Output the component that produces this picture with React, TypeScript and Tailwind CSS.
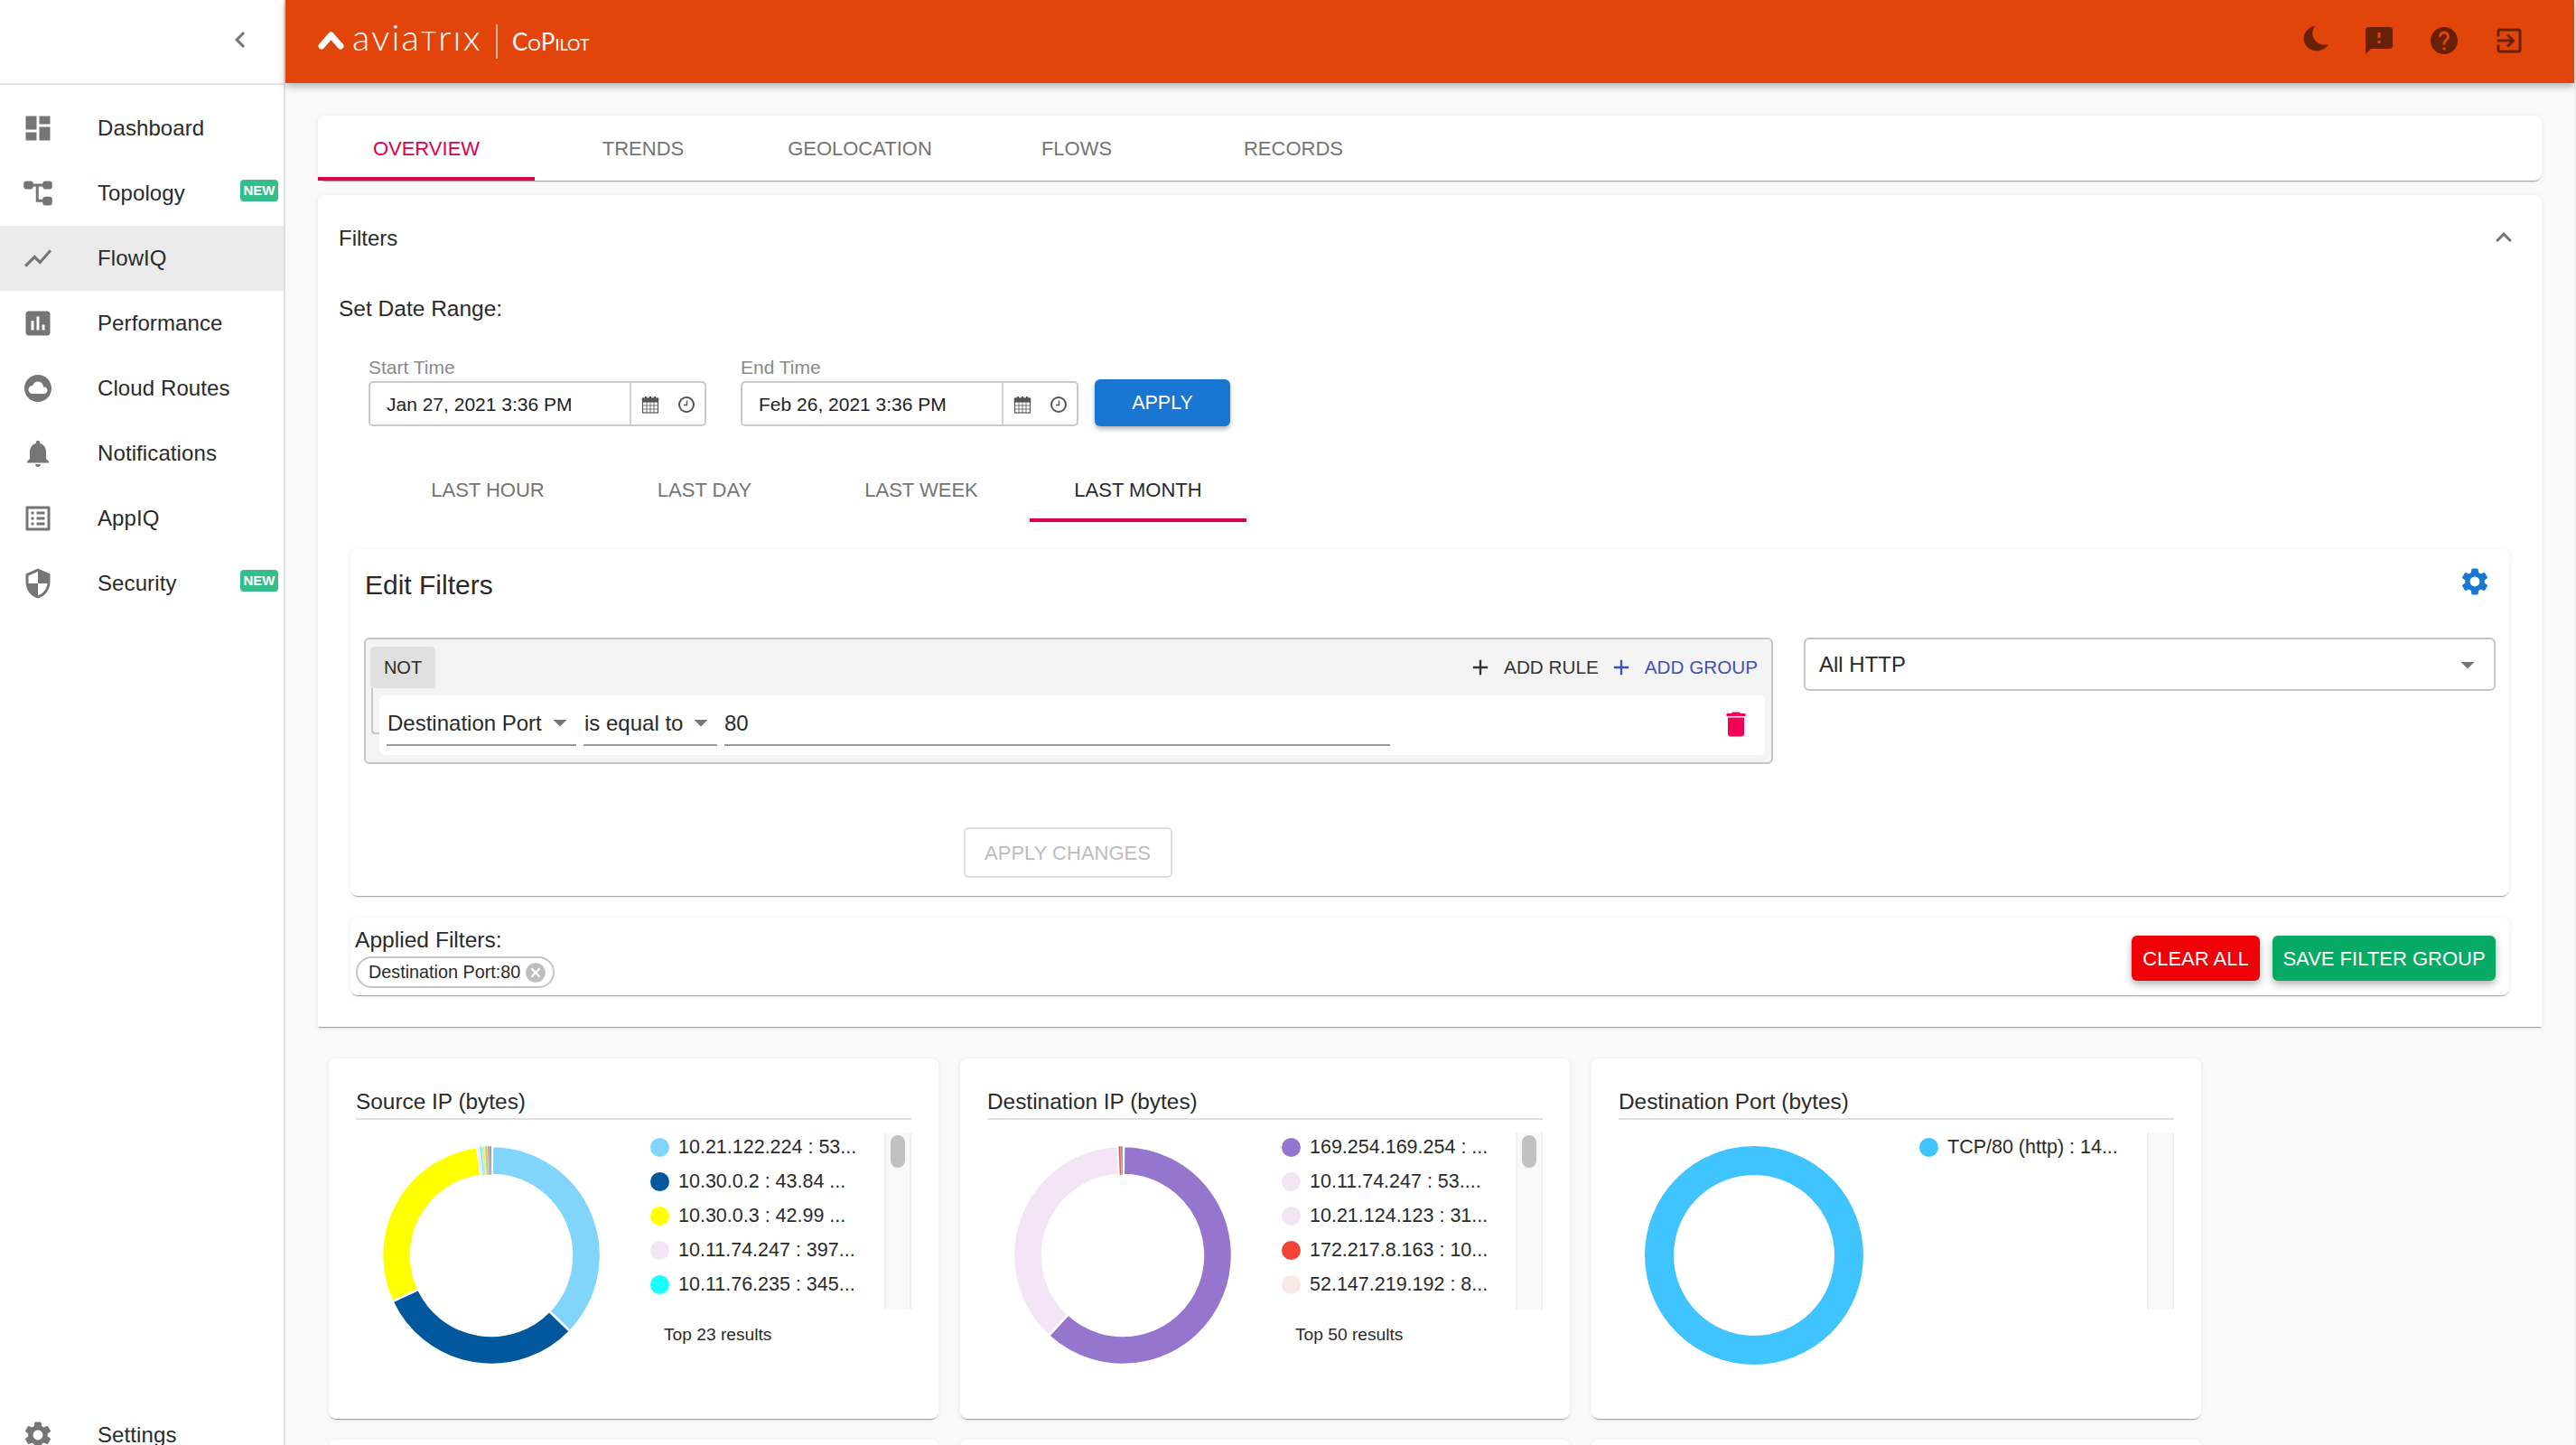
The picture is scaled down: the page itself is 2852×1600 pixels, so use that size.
/* ============================================================
   COPILOT FLOWIQ — Overview tab with filters and top-talker donuts
   ============================================================ */

const P = {
  dashboard: 'M3 13h8V3H3v10zm0 8h8v-6H3v6zm10 0h8V11h-8v10zm0-18v6h8V3h-8z',
  chart: 'M3.5 18.49l6-6.01 4 4L22 6.92l-1.41-1.41-7.09 7.97-4-4L2 16.99z',
  assessment: 'M19 3H5c-1.1 0-2 .9-2 2v14c0 1.1.9 2 2 2h14c1.1 0 2-.9 2-2V5c0-1.1-.9-2-2-2zM9 17H7v-7h2v7zm4 0h-2V7h2v10zm4 0h-2v-4h2v4z',
  cloud: 'M12 2C6.47 2 2 6.47 2 12s4.47 10 10 10 10-4.47 10-10S17.53 2 12 2zm4.5 14H8c-1.66 0-3-1.34-3-3s1.34-3 3-3l.14.01C8.58 8.28 10.13 7 12 7c2.21 0 4 1.79 4 4h.5c1.38 0 2.5 1.12 2.5 2.5S17.88 16 16.5 16z',
  bell: 'M12 22c1.1 0 2-.9 2-2h-4c0 1.1.89 2 2 2zm6-6v-5c0-3.07-1.64-5.64-4.5-6.32V4c0-.83-.67-1.5-1.5-1.5s-1.5.67-1.5 1.5v.68C7.63 5.36 6 7.92 6 11v5l-2 2v1h16v-1l-2-2z',
  list: 'M19 5v14H5V5h14m1.1-2H3.9c-.5 0-.9.4-.9.9v16.2c0 .4.4.9.9.9h16.2c.4 0 .9-.5.9-.9V3.9c0-.5-.5-.9-.9-.9zM11 7h6v2h-6V7zm0 4h6v2h-6v-2zm0 4h6v2h-6zM7 7h2v2H7zm0 4h2v2H7zm0 4h2v2H7z',
  security: 'M12 1L3 5v6c0 5.55 3.84 10.74 9 12 5.16-1.26 9-6.45 9-12V5l-9-4zm0 10.99h7c-.53 4.12-3.28 7.79-7 8.94V12H5V6.3l7-3.11v8.8z',
  settings: 'M19.14 12.94c.04-.3.06-.61.06-.94 0-.32-.02-.64-.07-.94l2.03-1.58c.18-.14.23-.41.12-.61l-1.92-3.32c-.12-.22-.37-.29-.59-.22l-2.39.96c-.5-.38-1.03-.7-1.62-.94l-.36-2.54c-.04-.24-.24-.41-.48-.41h-3.84c-.24 0-.43.17-.47.41l-.36 2.54c-.59.24-1.13.57-1.62.94l-2.39-.96c-.22-.08-.47 0-.59.22L2.74 8.87c-.12.21-.08.47.12.61l2.03 1.58c-.05.3-.09.63-.09.94s.02.64.07.94l-2.03 1.58c-.18.14-.23.41-.12.61l1.92 3.32c.12.22.37.29.59.22l2.39-.96c.5.38 1.03.7 1.62.94l.36 2.54c.05.24.24.41.48.41h3.84c.24 0 .44-.17.47-.41l.36-2.54c.59-.24 1.13-.56 1.62-.94l2.39.96c.22.08.47 0 .59-.22l1.92-3.32c.12-.22.07-.47-.12-.61l-2.01-1.58zM12 15.6c-1.98 0-3.6-1.62-3.6-3.6s1.62-3.6 3.6-3.6 3.6 1.62 3.6 3.6-1.62 3.6-3.6 3.6z',
  chevronLeft: 'M15.41 7.41L14 6l-6 6 6 6 1.41-1.41L10.83 12z',
  expandLess: 'M12 8l-6 6 1.41 1.41L12 10.83l4.59 4.58L18 14z',
  moon: 'M11.5 3C6.5 4 3 8 3 12.5c0 5 4.5 9 9.5 9 3.5 0 7-2 9-4.7-6.5 1.7-12-2.8-12-8.3 0-2 .8-4 2-5.5z',
  feedback: 'M20 2H4c-1.1 0-1.99.9-1.99 2L2 22l4-4h14c1.1 0 2-.9 2-2V4c0-1.1-.9-2-2-2zm-7 12h-2v-2h2v2zm0-4h-2V6h2v4z',
  help: 'M12 2C6.48 2 2 6.48 2 12s4.48 10 10 10 10-4.48 10-10S17.52 2 12 2zm1 17h-2v-2h2v2zm2.07-7.75l-.9.92C13.45 12.9 13 13.5 13 15h-2v-.5c0-1.1.45-2.1 1.17-2.83l1.24-1.26c.37-.36.59-.86.59-1.41 0-1.1-.9-2-2-2s-2 .9-2 2H8c0-2.21 1.79-4 4-4s4 1.79 4 4c0 .88-.36 1.68-.93 2.25z',
  exit: 'M10.09 15.59L11.5 17l5-5-5-5-1.41 1.41L12.67 11H3v2h9.67l-2.58 2.59zM19 3H5c-1.11 0-2 .9-2 2v4h2V5h14v14H5v-4H3v4c0 1.1.89 2 2 2h14c1.1 0 2-.9 2-2V5c0-1.1-.9-2-2-2z',
  trash: 'M6 19c0 1.1.9 2 2 2h8c1.1 0 2-.9 2-2V7H6v12zM19 4h-3.5l-1-1h-5l-1 1H5v2h14V4z',
  add: 'M19 13h-6v6h-2v-6H5v-2h6V5h2v6h6v2z',
  drop: 'M7 10l5 5 5-5z',
  cancel: 'M12 2C6.47 2 2 6.47 2 12s4.47 10 10 10 10-4.47 10-10S17.53 2 12 2zm5 13.59L15.59 17 12 13.41 8.41 17 7 15.59 10.59 12 7 8.41 8.41 7 12 10.59 15.59 7 17 8.41 13.41 12 17 15.59z',
};

function Icon({ d, className }: { d: string; className: string }) {
  return (
    <svg viewBox="0 0 24 24" fill="currentColor" className={className}>
      <path d={d} />
    </svg>
  );
}

function TopologyIcon() {
  return (
    <svg viewBox="0 0 24 24" fill="currentColor" className="w-[36px] h-[36px] shrink-0 text-[#757575]">
      <rect x="1.5" y="3" width="7" height="6" rx="2" />
      <rect x="15.5" y="3" width="7" height="6" rx="2" />
      <rect x="15.5" y="14.5" width="7" height="6.5" rx="2" />
      <path d="M8 6h8M11.5 6v11.5h4.5" fill="none" stroke="currentColor" strokeWidth="2" />
    </svg>
  );
}

const NAV = [
  { label: 'Dashboard', d: P.dashboard },
  { label: 'Topology', isNew: true },
  { label: 'FlowIQ', d: P.chart, active: true },
  { label: 'Performance', d: P.assessment },
  { label: 'Cloud Routes', d: P.cloud },
  { label: 'Notifications', d: P.bell },
  { label: 'AppIQ', d: P.list },
  { label: 'Security', d: P.security, isNew: true },
];

function NavRow({ label, d, active, isNew }: { label: string; d?: string; active?: boolean; isNew?: boolean }) {
  return (
    <div className={`h-[72px] flex items-center pl-[24px] pr-[6px] ${active ? 'bg-[#ebebeb]' : ''}`}>
      {d ? <Icon d={d} className="w-[36px] h-[36px] shrink-0 text-[#757575]" /> : <TopologyIcon />}
      <span className="ml-[48px] text-[24px] text-[#2a2a2a] tracking-[0.1px]">{label}</span>
      {isNew && (
        <span className="ml-auto -mt-[6px] w-[42px] h-[24px] rounded-[4px] bg-[#36bd8c] text-white text-[15px] font-bold flex items-center justify-center">
          NEW
        </span>
      )}
    </div>
  );
}

function Sidebar() {
  return (
    <aside className="w-[316px] shrink-0 h-full bg-white border-r-2 border-[#e0e0e0] overflow-hidden">
      <div className="h-[94px] border-b-2 border-[#e4e4e4] flex items-center justify-end pr-[30px] pb-[4px]">
        <Icon d={P.chevronLeft} className="w-[36px] h-[36px] text-[#757575]" />
      </div>
      <div className="mt-[12px]">
        {NAV.map((n) => (
          <NavRow key={n.label} {...n} />
        ))}
      </div>
      <div className="mt-[871px]">
        <NavRow label="Settings" d={P.settings} />
      </div>
    </aside>
  );
}

function TopBar() {
  return (
    <header className="h-[92px] shrink-0 bg-[#e2450a] shadow-[0_4px_8px_rgba(0,0,0,0.28)] flex items-center pl-[36px] pr-[54px] relative z-10">
      <svg viewBox="0 0 29 21" className="w-[29px] h-[21px] mt-[-4px]">
        <path d="M4 17L14.5 5L25 17" fill="none" stroke="white" strokeWidth="7" strokeLinecap="round" strokeLinejoin="round" />
      </svg>
      <span className="ml-[9px] w-[142px] [font-family:Lato,sans-serif] font-light text-[40px] leading-none text-white tracking-[2.2px] -mt-[10px] whitespace-nowrap">
        avia<span className="text-[29px]">T</span>rıx
      </span>
      <span className="ml-[17px] w-[2px] h-[38px] bg-[#f3b79f]" />
      <span className="ml-[16px] [font-family:Lato,sans-serif] font-normal text-[26px] leading-none text-white [font-variant:small-caps]">CoPilot</span>
      <div className="ml-auto flex items-center gap-[36px] text-[#682008] -mt-[2px]">
        <Icon d={P.moon} className="w-[36px] h-[36px] -mt-[6px] -mr-[2px]" />
        <Icon d={P.feedback} className="w-[36px] h-[36px]" />
        <Icon d={P.help} className="w-[36px] h-[36px]" />
        <Icon d={P.exit} className="w-[36px] h-[36px]" />
      </div>
    </header>
  );
}

const TOP_TABS = ['OVERVIEW', 'TRENDS', 'GEOLOCATION', 'FLOWS', 'RECORDS'];
const RANGE_TABS = ['LAST HOUR', 'LAST DAY', 'LAST WEEK', 'LAST MONTH'];

const cardShadow = 'shadow-[0_2px_1px_-1px_rgba(0,0,0,0.35),0_1px_6px_rgba(0,0,0,0.08)]';

function CalendarIcon() {
  return (
    <svg viewBox="0 0 20 20" className="w-[20px] h-[20px] text-[#555]" fill="none" stroke="currentColor" strokeWidth="1.2">
      <rect x="1.5" y="3.5" width="17" height="15.5" fill="#fff" />
      <rect x="1.5" y="3" width="17" height="4" fill="currentColor" />
      <path d="M5 1v4M10 1v4M15 1v4" strokeWidth="2" />
      <path d="M1.5 11h17M1.5 15h17M6 7v12M10 7v12M14 7v12" strokeWidth="0.8" />
    </svg>
  );
}

function ClockIcon() {
  return (
    <svg viewBox="0 0 20 20" className="w-[20px] h-[20px] text-[#555]" fill="none" stroke="currentColor" strokeWidth="2">
      <circle cx="10" cy="10" r="8" />
      <path d="M10.5 5.5v5H7" strokeWidth="1.4" />
    </svg>
  );
}

function DateField({ label, value }: { label: string; value: string }) {
  return (
    <div className="w-[374px]">
      <div className="h-[30px] text-[21px] leading-[30px] text-[#8a8a8a]">{label}</div>
      <div className="h-[50px] border-2 border-[#c9c9c9] rounded-[5px] flex items-center">
        <span className="w-[289px] h-full flex items-center pl-[18px] pt-[2px] text-[21px] text-[#222] border-r-2 border-[#d4d4d4]">{value}</span>
        <span className="flex-1 flex items-center justify-around pl-[1px] pt-[1px]">
          <CalendarIcon />
          <ClockIcon />
        </span>
      </div>
    </div>
  );
}

function TextButton({ color, children }: { color: string; children: string }) {
  return (
    <button className={`h-[50px] rounded-[6px] text-white text-[22px] shadow-[0_4px_8px_rgba(0,0,0,0.3)] ${color}`}>{children}</button>
  );
}

function RuleSelect({ text, width }: { text: string; width: string }) {
  return (
    <div className={`h-[50px] border-b-2 border-[#9a9a9a] flex items-center justify-between text-[24px] text-[#2a2a2a] whitespace-nowrap ${width}`}>
      <span className="pl-[1px] pt-[2px]">{text}</span>
      <Icon d={P.drop} className="w-[36px] h-[36px] text-[#757575]" />
    </div>
  );
}

function EditFilters() {
  return (
    <section className={`mx-[36px] mt-[30px] h-[384px] bg-white rounded-[8px] ${cardShadow} pt-[20px]`}>
      <div className="flex items-center justify-between pl-[16px] pr-[20px] h-[40px]">
        <h2 className="text-[30px] text-[#2a2a2a] font-normal -mt-[2px]">Edit Filters</h2>
        <Icon d={P.settings} className="w-[36px] h-[36px] text-[#1976d2] -mt-[8px]" />
      </div>
      <div className="flex gap-[34px] pl-[15px] pr-[15px] mt-[38px]">
        <div className="w-[1560px] flex flex-col items-center">
          <div className="w-full h-[140px] relative bg-[#f4f4f4] border-2 border-[#c6c6c6] rounded-[6px] pt-[8px]">
            <div className="flex items-center justify-between pl-[5px] pr-[15px]">
              <span className="w-[72px] h-[46px] bg-[#e0e0e0] rounded-[4px] flex items-center justify-center text-[20px] text-[#2a2a2a]">NOT</span>
              <div className="flex items-center text-[20.7px]">
                <Icon d={P.add} className="w-[28px] h-[28px] text-[#333]" />
                <span className="ml-[12px] text-[#333]">ADD RULE</span>
                <Icon d={P.add} className="ml-[11px] w-[28px] h-[28px] text-[#3f51b5]" />
                <span className="ml-[12px] text-[#3f51b5]">ADD GROUP</span>
              </div>
            </div>
            <div className="absolute left-[6px] top-[54px] w-[10px] h-[51px] border-l-2 border-b-2 border-[#c6c6c6] rounded-bl-[4px]" />
            <div className="relative ml-[15px] mr-[7px] mt-[8px] h-[66px] bg-white rounded-[6px] flex items-start pt-[6px] pl-[8px] gap-[8px]">
              <RuleSelect text="Destination Port" width="w-[210px]" />
              <RuleSelect text="is equal to" width="w-[148px]" />
              <div className="w-[737px] h-[50px] border-b-2 border-[#9a9a9a] flex items-center text-[24px] text-[#2a2a2a]">
                <span className="pt-[2px]">80</span>
              </div>
              <Icon d={P.trash} className="ml-auto mr-[14px] mt-[8px] w-[36px] h-[36px] text-[#f50057]" />
            </div>
          </div>
          <button className="mt-[70px] -ml-[2px] w-[231px] h-[56px] border-2 border-[#e0e0e0] rounded-[5px] text-[22px] text-[#bdbdbd]">APPLY CHANGES</button>
        </div>
        <div className="flex-1 h-[59px] border-2 border-[#c6c6c6] rounded-[6px] flex items-center justify-between pl-[15px] pr-[11px] text-[24px] text-[#2a2a2a]">
          <span>All HTTP</span>
          <Icon d={P.drop} className="w-[36px] h-[36px] text-[#757575]" />
        </div>
      </div>
    </section>
  );
}

function AppliedFilters() {
  return (
    <section className={`mx-[36px] mt-[24px] h-[86px] bg-white rounded-[8px] ${cardShadow} flex justify-between pl-[5px] pr-[15px]`}>
      <div>
        <div className="mt-[10px] h-[30px] text-[24.6px] leading-[30px] text-[#2a2a2a]">Applied Filters:</div>
        <div className="mt-[3px] ml-[1px] w-[220px] h-[35px] border-2 border-[#c4c4c4] rounded-full flex items-center pl-[12px] text-[19.8px] text-[#2a2a2a] whitespace-nowrap">
          Destination Port:80
          <Icon d={P.cancel} className="ml-[4px] w-[26px] h-[26px] text-[#bdbdbd]" />
        </div>
      </div>
      <div className="flex gap-[14px] pt-[20px]">
        <TextButton color="bg-[#f00007] w-[142px]">CLEAR ALL</TextButton>
        <TextButton color="bg-[#05ab64] w-[247px]">SAVE FILTER GROUP</TextButton>
      </div>
    </section>
  );
}

function FiltersCard() {
  return (
    <section className={`mt-[16px] h-[921px] shrink-0 bg-white rounded-t-[8px] ${cardShadow}`}>
      <div className="flex items-center justify-between pl-[23px] pr-[24px] pt-[32px] h-[62px]">
        <span className="text-[24px] leading-[30px] text-[#2a2a2a] pt-[2px]">Filters</span>
        <Icon d={P.expandLess} className="w-[36px] h-[36px] text-[#757575]" />
      </div>
      <div className="mt-[49px] ml-[23px] text-[24.5px] leading-[30px] text-[#2a2a2a]">Set Date Range:</div>
      <div className="flex items-end ml-[56px] mt-[35px]">
        <DateField label="Start Time" value="Jan 27, 2021 3:36 PM" />
        <div className="ml-[38px]">
          <DateField label="End Time" value="Feb 26, 2021 3:36 PM" />
        </div>
        <button className="ml-[18px] w-[150px] h-[52px] bg-[#1976d2] rounded-[6px] text-white text-[21.5px] shadow-[0_3px_5px_rgba(0,0,0,0.3)]">APPLY</button>
      </div>
      <div className="flex ml-[68px] mt-[36px] h-[70px]">
        {RANGE_TABS.map((t) => (
          <div
            key={t}
            className={`w-[240px] flex items-center justify-center text-[22px] ${t === 'LAST MONTH' ? 'text-[#2a2a2a] pt-[3px] border-b-4 border-[#dc004e]' : 'text-[#757575] pb-[1px]'}`}
          >
            {t}
          </div>
        ))}
      </div>
      <EditFilters />
      <AppliedFilters />
    </section>
  );
}

type Slice = { from: number; to: number; color: string };

function arc(from: number, to: number) {
  const R = 121;
  const r = 89;
  const pt = (rad: number, deg: number) => {
    const a = (deg * Math.PI) / 180;
    return `${(125 + rad * Math.sin(a)).toFixed(2)} ${(125 - rad * Math.cos(a)).toFixed(2)}`;
  };
  const large = to - from > 180 ? 1 : 0;
  return `M${pt(R, from)}A${R} ${R} 0 ${large} 1 ${pt(R, to)}L${pt(r, to)}A${r} ${r} 0 ${large} 0 ${pt(r, from)}Z`;
}

const SOURCE_SLICES: Slice[] = [
  { from: 0.5, to: 134, color: '#81d4fa' },
  { from: 134, to: 245, color: '#01579b' },
  { from: 245, to: 352.5, color: '#ffff00' },
  { from: 352.5, to: 354, color: '#f3e5f5' },
  { from: 354, to: 355, color: '#18ffff' },
  { from: 355, to: 356.5, color: '#ffe082' },
  { from: 356.5, to: 358, color: '#aed581' },
  { from: 358, to: 359, color: '#e57373' },
  { from: 359, to: 360, color: '#78909c' },
];

const DEST_SLICES: Slice[] = [
  { from: 0.5, to: 222.7, color: '#9575cd' },
  { from: 222.7, to: 357.5, color: '#f3e5f5' },
  { from: 357.8, to: 359, color: '#f44336' },
  { from: 359, to: 360, color: '#78909c' },
];

const CHARTS = [
  {
    title: 'Source IP (bytes)',
    slices: SOURCE_SLICES,
    footer: 'Top 23 results',
    legend: [
      ['#81d4fa', '10.21.122.224 : 53...'],
      ['#01579b', '10.30.0.2 : 43.84 ...'],
      ['#ffff00', '10.30.0.3 : 42.99 ...'],
      ['#f3e5f5', '10.11.74.247 : 397...'],
      ['#18ffff', '10.11.76.235 : 345...'],
    ],
  },
  {
    title: 'Destination IP (bytes)',
    slices: DEST_SLICES,
    footer: 'Top 50 results',
    legend: [
      ['#9575cd', '169.254.169.254 : ...'],
      ['#f3e5f5', '10.11.74.247 : 53....'],
      ['#f3e5f5', '10.21.124.123 : 31...'],
      ['#f44336', '172.217.8.163 : 10...'],
      ['#fbe9e7', '52.147.219.192 : 8...'],
    ],
  },
  {
    title: 'Destination Port (bytes)',
    slices: [] as Slice[],
    legend: [['#40c4ff', 'TCP/80 (http) : 14...']],
  },
];

function ChartCard({ title, slices, legend, footer }: { title: string; slices: Slice[]; legend: string[][]; footer?: string }) {
  return (
    <div className={`w-[675px] h-[399px] bg-white rounded-[8px] ${cardShadow} px-[30px] pt-[32px]`}>
      <div className="h-[36px] border-b-2 border-[#e0e0e0] text-[24.4px] leading-[32px] text-[#2a2a2a]">{title}</div>
      <div className="flex mt-[14px]">
        <div className="w-[326px] shrink-0 pl-[25px] pt-[11px]">
          <svg viewBox="0 0 250 250" className="w-[250px] h-[250px]">
            {slices.length === 0 && <circle cx="125" cy="125" r="105" fill="none" stroke="#40c4ff" strokeWidth="32" />}
            {slices.map((s) => (
              <path key={s.from} d={arc(s.from, s.to)} fill={s.color} stroke="#fff" strokeWidth={s.to - s.from > 10 ? 2.5 : 0.4} />
            ))}
          </svg>
        </div>
        <div className={`flex-1 ${footer ? '' : 'pl-[7px]'}`}>
          <div className="flex h-[196px]">
            <ul className="flex-1 -mt-[3px]">
              {legend.map(([color, text]) => (
                <li key={text} className="h-[38px] flex items-center gap-[10px] text-[21.5px] text-[#2a2a2a] whitespace-nowrap">
                  <span className="w-[21px] h-[21px] rounded-full shrink-0 bg-[var(--dot)]" style={{ '--dot': color } as React.CSSProperties} />
                  {text}
                </li>
              ))}
            </ul>
            <div className="w-[30px] shrink-0 bg-[#f9f9f9] border-x-2 border-[#efefef] pt-[3px]">
              {footer && <div className="mx-auto w-[16px] h-[36px] rounded-full bg-[#c1c1c1]" />}
            </div>
          </div>
          {footer && <div className="mt-[14px] pl-[15px] text-[19.2px] leading-[28px] text-[#2a2a2a]">{footer}</div>}
        </div>
      </div>
    </div>
  );
}

export default function App() {
  return (
    <div className="flex h-[1600px] w-[2852px] overflow-hidden bg-[#fafafa] [font-family:Liberation_Sans,Helvetica,Arial,sans-serif]">
      <Sidebar />
      <main className="flex-1 min-w-0 flex flex-col border-r-2 border-[#f0f0f0]">
        <TopBar />
        <div className="flex-1 min-h-0 overflow-hidden pl-[36px] pr-[36px] pt-[36px]">
          <div className={`h-[72px] bg-white rounded-[8px] ${cardShadow} flex`}>
            {TOP_TABS.map((t) => (
              <div
                key={t}
                className={`w-[240px] flex items-center justify-center text-[22px] ${t === 'OVERVIEW' ? 'text-[#dc004e] pt-[4px] border-b-4 border-[#dc004e]' : 'text-[#757575]'}`}
              >
                {t}
              </div>
            ))}
          </div>
          <FiltersCard />
          <div className="mt-[35px] ml-[12px] grid grid-cols-[675px_675px_675px] gap-x-[24px] gap-y-[23px]">
            {CHARTS.map((c) => (
              <ChartCard key={c.title} {...c} />
            ))}
            <div className={`h-[100px] bg-white rounded-[8px] ${cardShadow}`} />
            <div className={`h-[100px] bg-white rounded-[8px] ${cardShadow}`} />
            <div className={`h-[100px] bg-white rounded-[8px] ${cardShadow}`} />
          </div>
        </div>
      </main>
    </div>
  );
}
